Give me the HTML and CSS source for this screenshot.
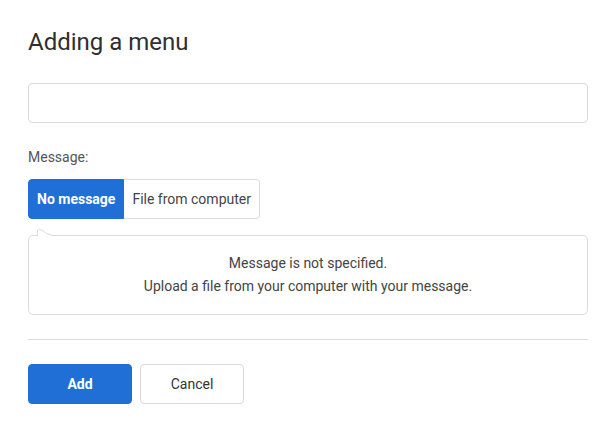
FILE: index.html
```html
<!DOCTYPE html>
<html>
<head>
<meta charset="utf-8">
<link rel="stylesheet" href="styles.css">
</head>
<body>
<div class="page">
  <h1 class="title">Adding a menu</h1>
  <input class="text-input" type="text">
  <div class="label">Message:</div>
  <div class="toggle">
    <div class="toggle-btn active">No message</div>
    <div class="toggle-btn">File from computer</div>
  </div>
  <div class="bubble">
    <svg class="tail" width="20" height="9" viewBox="0 0 20 9">
      <path d="M1.5 9 L1.5 2 Q3 0.5 6 2 Q10 6.5 17 7.5 L20 7.5 L20 9 Z" fill="#fff"/>
      <path d="M1.5 8 L1.5 2 Q3 0.5 6 2 Q10 6.5 17 7.5 L20 7.5" fill="none" stroke="#dcdcdc" stroke-width="1"/>
    </svg>
    <p class="bubble-line">Message is not specified.</p>
    <p class="bubble-line">Upload a file from your computer with your message.</p>
  </div>
  <div class="divider"></div>
  <div class="actions">
    <button class="btn primary">Add</button>
    <button class="btn secondary">Cancel</button>
  </div>
</div>
</body>
</html>
```
FILE: styles.css
```css
* { box-sizing: border-box; }
html, body { margin: 0; background: #fff; }
body { font-family: Roboto, "Liberation Sans", sans-serif; color: #333; }
.page { padding: 28px 28px 0 28px; display: flex; flex-direction: column; }
.title { margin: 0; font-size: 24px; line-height: 28px; font-weight: 400; color: #2f2f2f; }
.text-input {
  margin-top: 27px; width: 560px; height: 40px;
  border: 1px solid #d9d9d9; border-radius: 4px; background: #fff; outline: none;
}
.label { margin-top: 26px; font-size: 14px; line-height: 16px; color: #555; }
.toggle { margin-top: 14px; display: flex; align-self: flex-start; }
.toggle-btn {
  height: 40px; display: flex; align-items: center; padding: 0 8px;
  font-size: 14px; color: #444; border: 1px solid #dcdcdc; border-left: none;
  border-radius: 0 4px 4px 0;
}
.toggle-btn.active {
  background: #1f6fd6; color: #fff; font-weight: 700; border: 1px solid #1f6fd6;
  border-radius: 4px 0 0 4px;
}
.bubble {
  position: relative; margin-top: 16px; width: 560px; height: 80px;
  border: 1px solid #dcdcdc; border-radius: 5px;
  display: flex; flex-direction: column; align-items: center; justify-content: center;
}
.tail { position: absolute; left: 7px; top: -8px; }
.bubble-line { margin: 0; font-size: 14px; line-height: 23px; color: #444; }
.divider { margin-top: 24px; height: 1px; width: 560px; background: #dcdcdc; }
.actions { margin-top: 24px; display: flex; gap: 8px; }
.btn {
  width: 104px; height: 40px; border-radius: 4px; font-family: Roboto, "Liberation Sans", sans-serif;
  font-size: 14px; cursor: pointer;
}
.btn.primary { background: #1f6fd6; border: 1px solid #1f6fd6; color: #fff; font-weight: 700; }
.btn.secondary { background: #fff; border: 1px solid #d9d9d9; color: #333; }
```
